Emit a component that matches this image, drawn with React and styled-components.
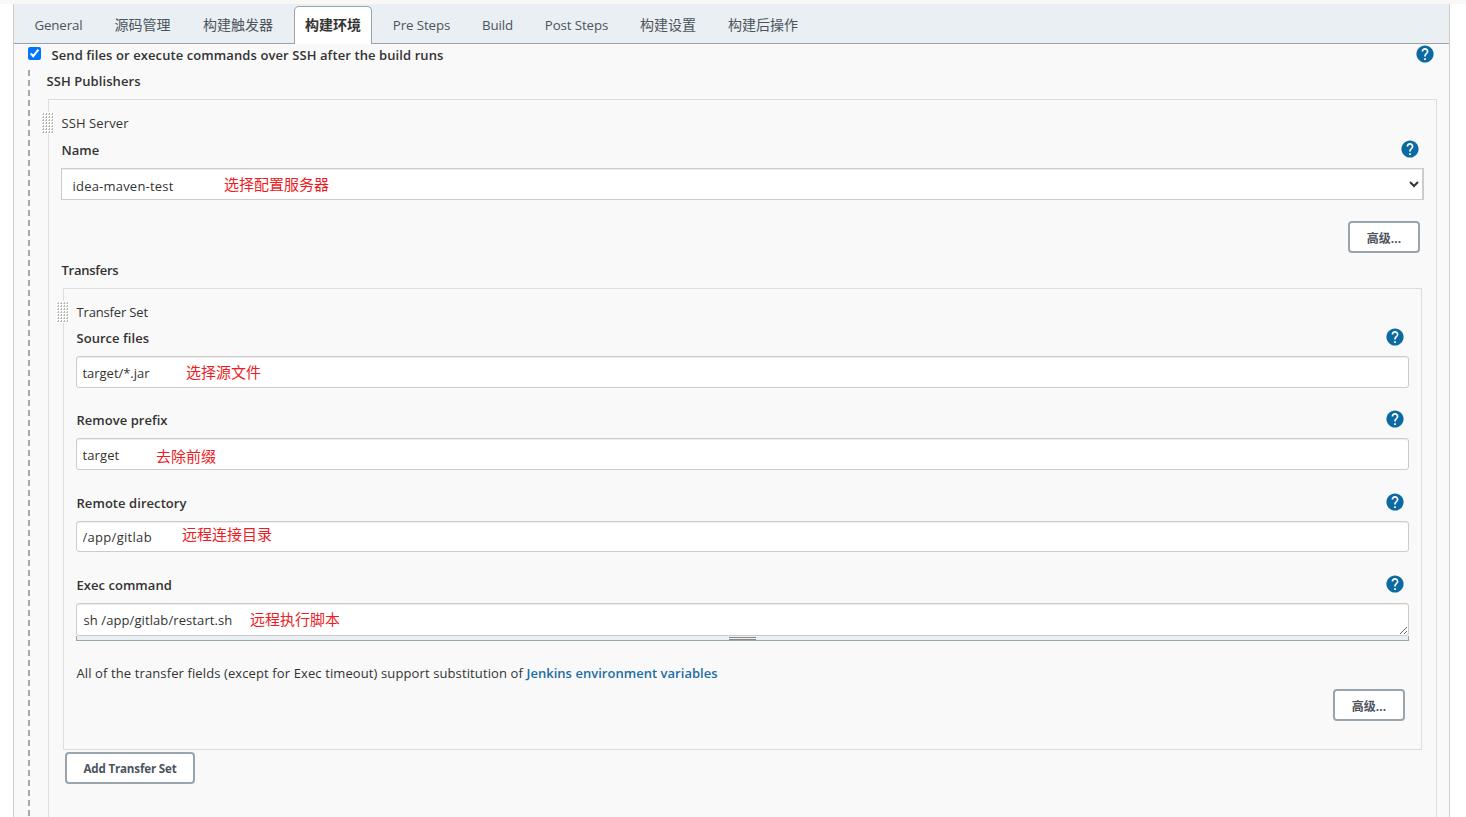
import React from 'react';
import styled, { createGlobalStyle } from 'styled-components';

const GlobalStyle = createGlobalStyle`
  * { box-sizing: border-box; }
  body {
    margin: 0;
    background: #fff;
    color: #333;
    font-family: "Open Sans", "Noto Sans CJK SC", sans-serif;
    font-size: 13px;
    line-height: 20px;
    overflow: hidden;
  }
`;

const Page = styled.div`
  height: 817px;
  display: flex;
  flex-direction: column;
  overflow: hidden;
`;

const TopStrip = styled.div`
  flex: none;
  height: 4px;
  background: #f8f8f6;
`;

const Panel = styled.main`
  flex: 1;
  display: flex;
  flex-direction: column;
  margin: 0 16px 0 13px;
  border: solid #ccc;
  border-width: 0 1px;
  background: #f9f9f9;
`;

const TabBar = styled.nav`
  flex: none;
  display: flex;
  align-items: flex-end;
  gap: 10px;
  height: 40px;
  padding-left: 10px;
  background: #e9eff2;
  border-bottom: 1px solid #98a4ab;
`;

const Tab = styled.a`
  display: flex;
  justify-content: center;
  width: ${(p) => p.$width}px;
  height: 38px;
  margin-bottom: -1px;
  padding-top: 8px;
  border: 1px solid ${(p) => (p.$active ? '#98a4ab' : 'transparent')};
  border-bottom: 0;
  border-radius: 5px 5px 0 0;
  background: ${(p) => (p.$active ? '#fff' : 'transparent')};
  color: ${(p) => (p.$active ? '#333' : '#4d545d')};
  font-size: ${(p) => (p.$cjk ? 14 : 13.3)}px;
  font-weight: ${(p) => (p.$active ? 700 : 400)};
  letter-spacing: ${(p) => (p.$cjk ? 0 : -0.1)}px;
  white-space: nowrap;
`;

const OptionRow = styled.div`
  flex: none;
  display: flex;
  align-items: flex-start;
  height: 26px;
  padding: 1px 16px 0 14px;
`;

const Checkbox = styled.input`
  width: 13px;
  height: 13px;
  margin: 2px 10px 0 0;
`;

const Label = styled.div`
  flex: 1;
  padding-left: 0.5px;
  font-weight: ${(p) => (p.$plain ? 400 : 600)};
  letter-spacing: ${(p) => p.$spacing || 0}px;
  white-space: nowrap;
`;

const HelpSvg = styled.svg`
  flex: none;
  display: block;
  width: 18px;
  height: 18px;
  margin-right: -1px;
`;

const Nested = styled.div`
  flex: 1;
  display: flex;
  margin-left: 14px;
`;

const DashRail = styled.div`
  flex: none;
  width: 2px;
  background: repeating-linear-gradient(to bottom, #a9a9a9 0 6px, transparent 6px 10px);
`;

const Publishers = styled.section`
  flex: 1;
  display: flex;
  flex-direction: column;
  padding: 1px 12px 0 16px;
`;

const ServerBlock = styled.section`
  position: relative;
  flex: 1;
  margin: 8px 0 0 2px;
  padding: 13px 12px 0;
  border: 1px solid #ddd;
  border-bottom: 0;
`;

const TransferBlock = styled.section`
  position: relative;
  height: 462px;
  margin: 8px 2px 0;
  padding: 13px 12px 0;
  border: 1px solid #ddd;
`;

const HandleSvg = styled.svg`
  position: absolute;
  left: -8px;
  top: 12px;
  width: 13px;
  height: 22px;
`;

const LabelRow = styled.div`
  display: flex;
  align-items: flex-start;
  height: ${(p) => p.$height || 20}px;
  margin-top: ${(p) => p.$gap || 0}px;
  padding-right: ${(p) => p.$inset || 0}px;
`;

const FieldWrap = styled.div`
  position: relative;
  height: ${(p) => p.$height || 32}px;
`;

const Select = styled.select`
  display: block;
  width: 100%;
  height: 32px;
  padding: 3px 1px 0 6.5px;
  border: 1px solid #ccc;
  border-right-width: 2px;
  border-right-color: #ccc;
  border-radius: 0;
  background: #fff;
  box-shadow: inset 0 1px 1px rgba(0, 0, 0, 0.075);
  color: #333;
  font: 13px "Open Sans", sans-serif;
  letter-spacing: ${(p) => p.$spacing || 0}px;
`;

const TextInput = styled.input`
  display: block;
  width: 100%;
  height: 100%;
  padding: 1px 6px 0 5.5px;
  border: 1px solid #ccc;
  border-radius: 3px;
  background: #fff;
  box-shadow: inset 0 1px 1px rgba(0, 0, 0, 0.075);
  color: #333;
  font: 13px "Open Sans", sans-serif;
  letter-spacing: ${(p) => p.$spacing || 0}px;
`;

const CommandArea = styled.textarea`
  display: block;
  width: 100%;
  height: 33px;
  padding: 6px 6px 4px 6.5px;
  border: 1px solid #ccc;
  border-radius: 3px;
  background: #fff;
  box-shadow: inset 0 1px 1px rgba(0, 0, 0, 0.075);
  color: #333;
  font: 13px/20px "Open Sans", sans-serif;
  letter-spacing: ${(p) => p.$spacing || 0}px;
  overflow: hidden;
  resize: vertical;
`;

const ResizeBar = styled.div`
  display: flex;
  justify-content: center;
  height: 5px;
  padding-top: 1px;
  border: 1px solid #98a4ab;
  border-top: 0;
  background: #e9eff2;
`;

const Grip = styled.div`
  width: 27px;
  height: 3px;
  border: solid #888;
  border-width: 1px 0;
`;

const Annotation = styled.span`
  position: absolute;
  left: ${(p) => p.$x}px;
  top: ${(p) => p.$y}px;
  color: #ed1c24;
  font-family: "Noto Sans CJK SC", sans-serif;
  font-size: 15px;
  line-height: 20px;
  white-space: nowrap;
  pointer-events: none;
`;

const ActionRow = styled.div`
  display: flex;
  justify-content: ${(p) => (p.$start ? 'flex-start' : 'flex-end')};
  padding: ${(p) => p.$pad};
`;

const Button = styled.button`
  width: ${(p) => p.$width}px;
  height: 32px;
  padding: 1px 0 0;
  border: 2px solid #98a4ae;
  border-radius: 4px;
  background: #fff;
  color: #4d545d;
  font: 700 ${(p) => (p.$latin ? 11.6 : 12)}px "Open Sans", "Noto Sans CJK SC", sans-serif;
  letter-spacing: ${(p) => (p.$latin ? -0.17 : 0)}px;
`;

const Note = styled.p`
  margin: 22px 0 0;
  padding-left: 0.5px;
  letter-spacing: 0.112px;
  white-space: nowrap;
`;

const NoteLink = styled.a`
  color: #1d6ea5;
  font-weight: 600;
  letter-spacing: 0.03px;
`;

const Help = () => (
  <HelpSvg viewBox="1.5 1.5 21 21">
    <path
      fill="#0b6aa2"
      d="M12 2C6.48 2 2 6.48 2 12s4.48 10 10 10 10-4.48 10-10S17.52 2 12 2z"
    />
    <path
      fill="#fff"
      d="M13 19h-2v-2h2v2zm2.07-7.75l-.9.92C13.45 12.9 13 13.5 13 15h-2v-.5c0-1.1.45-2.1 1.17-2.83l1.24-1.26c.37-.36.59-.86.59-1.41 0-1.1-.9-2-2-2s-2 .9-2 2H8c0-2.21 1.79-4 4-4s4 1.79 4 4c0 .88-.36 1.68-.93 2.25z"
    />
  </HelpSvg>
);

const DragHandle = () => (
  <HandleSvg viewBox="0 0 13 22" shapeRendering="crispEdges">
    <rect width="13" height="22" fill="#fff" />
    {[0, 1, 2, 3, 4, 5, 6].map((row) =>
      [0, 1, 2, 3].map((col) => (
        <g key={`${row}-${col}`}>
          <rect x={col * 3 + 1} y={row * 3 + 2} width="2" height="1" fill="#c9c9c5" />
          <rect x={col * 3 + 2} y={row * 3 + 1} width="1" height="2" fill="#b5b5ae" />
        </g>
      ))
    )}
  </HandleSvg>
);

const tabs = [
  { text: 'General', width: 69 },
  { text: '源码管理', width: 79, cjk: true },
  { text: '构建触发器', width: 92, cjk: true },
  { text: '构建环境', width: 78, cjk: true, active: true },
  { text: 'Pre Steps', width: 79 },
  { text: 'Build', width: 53 },
  { text: 'Post Steps', width: 85 },
  { text: '构建设置', width: 78, cjk: true },
  { text: '构建后操作', width: 92, cjk: true },
];

const fields = [
  { label: 'Source files', ls: 0.04, value: 'target/*.jar', vs: -0.03, note: '选择源文件', x: 110, y: 6, gap: 6, height: 32 },
  { label: 'Remove prefix', ls: 0.03, value: 'target', vs: 0.1, note: '去除前缀', x: 80, y: 8, gap: 22, height: 32 },
  { label: 'Remote directory', ls: 0.06, value: '/app/gitlab', vs: 0.3, note: '远程连接目录', x: 106, y: 3, gap: 23, height: 31 },
];

export default function App() {
  return (
    <Page>
      <GlobalStyle />
      <TopStrip />
      <Panel>
        <TabBar>
          {tabs.map((t) => (
            <Tab key={t.text} $width={t.width} $cjk={t.cjk} $active={t.active}>
              {t.text}
            </Tab>
          ))}
        </TabBar>
        <OptionRow>
          <Checkbox type="checkbox" defaultChecked />
          <Label $spacing={0.09}>Send files or execute commands over SSH after the build runs</Label>
          <Help />
        </OptionRow>
        <Nested>
          <DashRail />
          <Publishers>
            <LabelRow>
              <Label $spacing={0.07}>SSH Publishers</Label>
            </LabelRow>
            <ServerBlock>
              <DragHandle />
              <LabelRow>
                <Label $plain $spacing={0.1}>SSH Server</Label>
              </LabelRow>
              <LabelRow $gap={7} $height={28} $inset={6}>
                <Label>Name</Label>
                <Help />
              </LabelRow>
              <FieldWrap>
                <Select $spacing={0.21}>
                  <option>idea-maven-test</option>
                </Select>
                <Annotation $x={163} $y={6}>选择配置服务器</Annotation>
              </FieldWrap>
              <ActionRow $pad="21px 4px 7px">
                <Button $width={72}>高级...</Button>
              </ActionRow>
              <LabelRow>
                <Label $spacing={-0.27}>Transfers</Label>
              </LabelRow>
              <TransferBlock>
                <DragHandle />
                <LabelRow>
                  <Label $plain $spacing={-0.16}>Transfer Set</Label>
                </LabelRow>
                {fields.map((f) => (
                  <React.Fragment key={f.label}>
                    <LabelRow $gap={f.gap} $height={28} $inset={6}>
                      <Label $spacing={f.ls}>{f.label}</Label>
                      <Help />
                    </LabelRow>
                    <FieldWrap $height={f.height}>
                      <TextInput defaultValue={f.value} $spacing={f.vs} />
                      <Annotation $x={f.x} $y={f.y}>{f.note}</Annotation>
                    </FieldWrap>
                  </React.Fragment>
                ))}
                <LabelRow $gap={23} $height={28} $inset={6}>
                  <Label $spacing={0.04}>Exec command</Label>
                  <Help />
                </LabelRow>
                <FieldWrap $height={38}>
                  <CommandArea
                    defaultValue="sh /app/gitlab/restart.sh"
                    spellCheck={false}
                    $spacing={0.09}
                  />
                  <ResizeBar>
                    <Grip />
                  </ResizeBar>
                  <Annotation $x={174} $y={6}>远程执行脚本</Annotation>
                </FieldWrap>
                <Note>
                  All of the transfer fields (except for Exec timeout) support substitution of{' '}
                  <NoteLink>Jenkins environment variables</NoteLink>
                </Note>
                <ActionRow $pad="6px 4px 0">
                  <Button $width={72}>高级...</Button>
                </ActionRow>
              </TransferBlock>
              <ActionRow $start $pad="2px 4px 0">
                <Button $width={130} $latin>Add Transfer Set</Button>
              </ActionRow>
            </ServerBlock>
          </Publishers>
        </Nested>
      </Panel>
    </Page>
  );
}
